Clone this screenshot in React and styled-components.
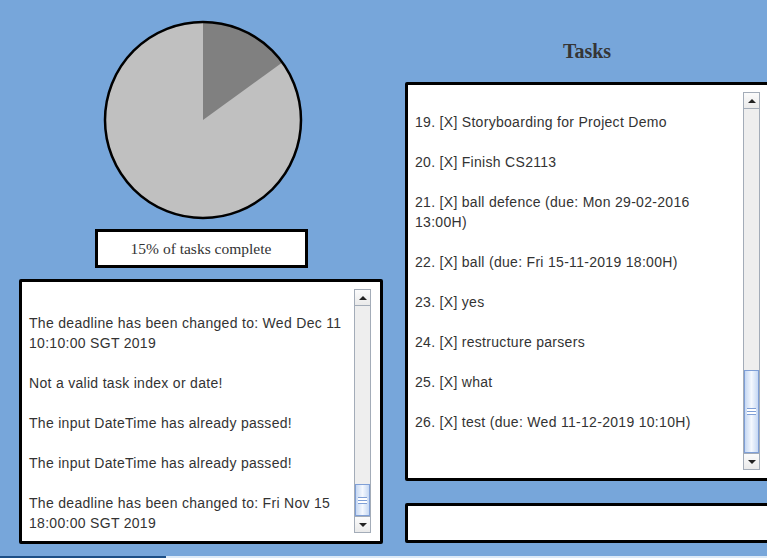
import React from 'react';
import styled, { createGlobalStyle } from 'styled-components';

const GlobalStyle = createGlobalStyle`
  html, body {
    margin: 0;
    padding: 0;
    background: #77a6da;
    overflow: hidden;
  }
  #root {
    width: 767px;
    height: 558px;
    overflow: hidden;
  }
`;

const Page = styled.div`
  width: 767px;
  height: 558px;
  display: flex;
  flex-direction: column;
  background: #77a6da;
  overflow: hidden;
`;

const Main = styled.div`
  flex: 1;
  display: grid;
  grid-template-columns: 364px 367px;
  column-gap: 22px;
  padding-left: 19px;
`;

const LeftColumn = styled.div`
  display: flex;
  flex-direction: column;
  align-items: center;
  padding-top: 20px;
`;

const RightColumn = styled.div`
  display: flex;
  flex-direction: column;
`;

const PieChart = styled.svg`
  display: block;
  width: 200px;
  height: 200px;
  margin-left: 3px;
`;

const StatusLabel = styled.div`
  box-sizing: border-box;
  width: 213px;
  height: 39px;
  margin-top: 9px;
  border: 3px solid #000;
  background: #fff;
  display: flex;
  align-items: center;
  justify-content: center;
  font-family: "Liberation Serif", "DejaVu Serif", serif;
  font-size: 15.5px;
  color: #333;
`;

const Title = styled.h2`
  margin: 0;
  height: 82px;
  box-sizing: border-box;
  padding: 39px 3px 0 0;
  text-align: center;
  font-family: "Liberation Serif", "DejaVu Serif", serif;
  font-weight: bold;
  font-size: 20px;
  line-height: 24px;
  color: #353535;
`;

const Panel = styled.div`
  box-sizing: border-box;
  width: 100%;
  height: ${p => p.h}px;
  margin-top: ${p => p.mt || 0}px;
  border: 3px solid #000;
  border-radius: 2px;
  background: #fff;
  display: flex;
  overflow: hidden;
`;

const TextArea = styled.div`
  flex: 1;
  padding: ${p => p.pt}px 0 0 ${p => p.pl}px;
  font-family: "Liberation Sans", Arial, sans-serif;
  font-size: 14px;
  letter-spacing: 0.3px;
  line-height: 20px;
  color: #333;
  overflow: hidden;
`;

const Entry = styled.div`
  max-width: ${p => p.w}px;
  margin-bottom: 20px;
`;

const ScrollBar = styled.div`
  width: 17px;
  margin: 7px 9px 8px 0;
  display: flex;
  flex-direction: column;
  box-sizing: border-box;
  border: 1px solid #a3acb8;
  background: #eeeeee;
`;

const ArrowButton = styled.div`
  height: 15px;
  flex: none;
  display: flex;
  align-items: center;
  justify-content: center;
  background: linear-gradient(#fbfbfb, #eaeaea);
  border-${p => (p.up ? 'bottom' : 'top')}: 1px solid #a3acb8;
  &::after {
    content: '';
    width: 0;
    height: 0;
    border-left: 4px solid transparent;
    border-right: 4px solid transparent;
    ${p => (p.up ? 'border-bottom: 4px solid #222;' : 'border-top: 4px solid #222;')}
  }
`;

const Track = styled.div`
  flex: 1;
  display: flex;
  flex-direction: column;
  justify-content: flex-end;
`;

const Thumb = styled.div`
  height: ${p => p.h}px;
  margin-bottom: ${p => p.mb || 0}px;
  box-sizing: border-box;
  border: 1px solid #7f9fd6;
  background: linear-gradient(90deg, #c6d8f3, #f4f8fe 50%, #c6d8f3);
  display: flex;
  align-items: center;
  justify-content: center;
  &::after {
    content: '';
    width: 9px;
    height: 5px;
    border-top: 1px solid #7f9fd6;
    border-bottom: 1px solid #7f9fd6;
    background: linear-gradient(#fff 2px, #7f9fd6 2px, #7f9fd6 3px, #fff 3px);
  }
`;

const InputBox = styled.div`
  box-sizing: border-box;
  width: 100%;
  height: 40px;
  margin-top: 22px;
  border: 3px solid #000;
  border-radius: 2px;
  background: #fff;
`;

const BottomStrip = styled.div`
  height: 2px;
  display: flex;
  background: #dceaf8;
`;

const StripFill = styled.div`
  width: 166px;
  background: #1d4f86;
`;

const tasks = [
  '19. [X] Storyboarding for Project Demo',
  '20. [X] Finish CS2113',
  '21. [X] ball defence (due: Mon 29-02-2016 13:00H)',
  '22. [X] ball (due: Fri 15-11-2019 18:00H)',
  '23. [X] yes',
  '24. [X] restructure parsers',
  '25. [X] what',
  '26. [X] test (due: Wed 11-12-2019 10:10H)',
];

const messages = [
  'The deadline has been changed to: Wed Dec 11 10:10:00 SGT 2019',
  'Not a valid task index or date!',
  'The input DateTime has already passed!',
  'The input DateTime has already passed!',
  'The deadline has been changed to: Fri Nov 15 18:00:00 SGT 2019',
];

const piePath = (pct, cx, cy, r) => {
  const a = (pct / 100) * Math.PI * 2;
  const x = cx + r * Math.sin(a);
  const y = cy - r * Math.cos(a);
  return `M${cx},${cy} L${cx},${cy - r} A${r},${r} 0 ${pct > 50 ? 1 : 0} 1 ${x},${y} Z`;
};

const Scroller = ({ thumb, offset }) => (
  <ScrollBar>
    <ArrowButton up />
    <Track>
      <Thumb h={thumb} mb={offset} />
    </Track>
    <ArrowButton />
  </ScrollBar>
);

const App = () => {
  const done = 15;
  return (
    <Page>
      <GlobalStyle />
      <Main>
        <LeftColumn>
          <PieChart viewBox="0 0 200 200">
            <circle cx="100" cy="100" r="98" fill="#c0c0c0" />
            <path d={piePath(done, 100, 100, 98)} fill="#808080" />
            <circle cx="100" cy="100" r="98" fill="none" stroke="#000" strokeWidth="2.5" />
          </PieChart>
          <StatusLabel>{done}% of tasks complete</StatusLabel>
          <Panel h={265} mt={11}>
            <TextArea pt={31} pl={7}>
              {messages.map((m, i) => (
                <Entry key={i} w={322}>{m}</Entry>
              ))}
            </TextArea>
            <Scroller thumb={32} offset={0} />
          </Panel>
        </LeftColumn>
        <RightColumn>
          <Title>Tasks</Title>
          <Panel h={399}>
            <TextArea pt={27} pl={7}>
              {tasks.map((t, i) => (
                <Entry key={i} w={305}>{t}</Entry>
              ))}
            </TextArea>
            <Scroller thumb={83} offset={0} />
          </Panel>
          <InputBox />
        </RightColumn>
      </Main>
      <BottomStrip>
        <StripFill />
      </BottomStrip>
    </Page>
  );
};

export default App;
